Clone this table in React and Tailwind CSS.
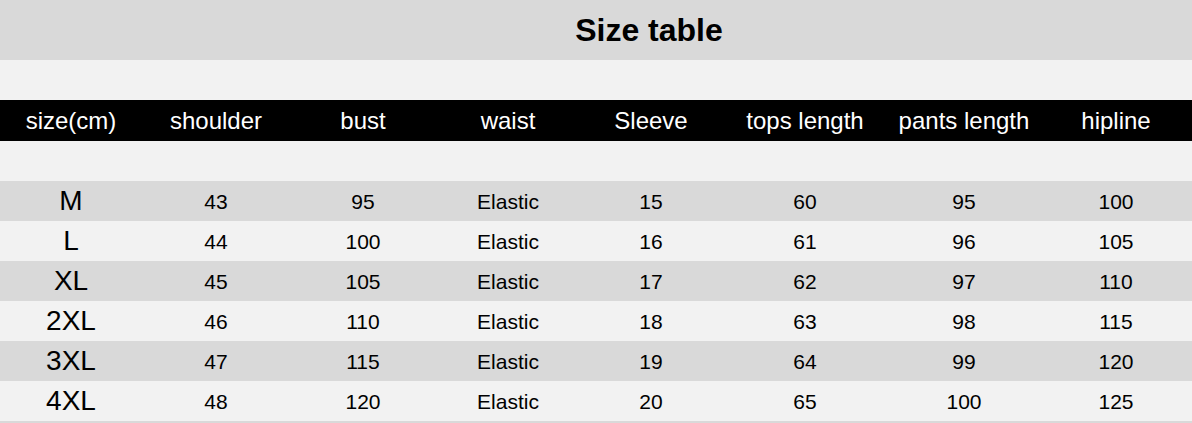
const headers = ["size(cm)", "shoulder", "bust", "waist", "Sleeve", "tops length", "pants length", "hipline"];
const rows = [
  ["M", "43", "95", "Elastic", "15", "60", "95", "100"],
  ["L", "44", "100", "Elastic", "16", "61", "96", "105"],
  ["XL", "45", "105", "Elastic", "17", "62", "97", "110"],
  ["2XL", "46", "110", "Elastic", "18", "63", "98", "115"],
  ["3XL", "47", "115", "Elastic", "19", "64", "99", "120"],
  ["4XL", "48", "120", "Elastic", "20", "65", "100", "125"],
];

const cols = "grid grid-cols-[142px_148px_146px_144px_142px_166px_152px_152px]";

export default function App() {
  return (
    <div className="w-[1192px] h-[423px] overflow-hidden bg-[#d9d9d9] text-black" style={{ fontFamily: '"Liberation Sans", Arial, sans-serif' }}>
      <div className="h-[60px] bg-[#d9d9d9] flex items-center justify-center pl-[106px]">
        <h1 className="text-[32px] font-bold leading-none">Size table</h1>
      </div>
      <div className="h-[40px] bg-[#f2f2f2]" />
      <div className={`${cols} h-[41px] bg-black text-white`}>
        {headers.map((h) => (
          <div key={h} className="flex items-center justify-center text-[24px] leading-none">{h}</div>
        ))}
      </div>
      <div className="h-[40px] bg-[#f2f2f2]" />
      {rows.map((r, i) => (
        <div key={r[0]} className={`${cols} h-[40px] ${i % 2 === 0 ? "bg-[#d9d9d9]" : "bg-[#f2f2f2]"}`}>
          {r.map((c, j) => (
            <div key={j} className={`flex items-center justify-center leading-none ${j === 0 ? "text-[28px]" : "text-[21px]"}`}>{c}</div>
          ))}
        </div>
      ))}
    </div>
  );
}
